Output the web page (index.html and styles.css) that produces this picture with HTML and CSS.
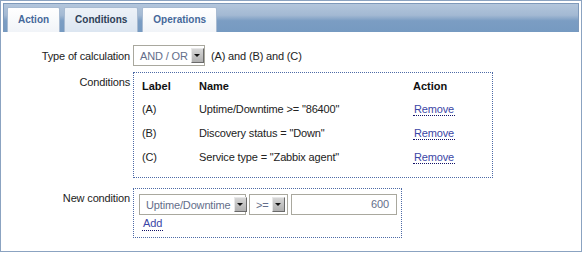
FILE: index.html
```html
<!DOCTYPE html>
<html lang="en">
<head>
    <meta charset="UTF-8">
    <title>Action conditions</title>
    <link rel="stylesheet" href="styles.css">
</head>
<body>
    <div class="frame">
        <ul class="tabs">
            <li class="tab">Action</li>
            <li class="tab active">Conditions</li>
            <li class="tab">Operations</li>
        </ul>

        <div class="form">
            <div class="row row-calc">
                <label class="row-label">Type of calculation</label>
                <div class="row-field">
                    <span class="select select-calc"><span class="select-text">AND / OR</span><span class="arrow"></span></span>
                    <span class="formula">(A) and (B) and (C)</span>
                </div>
            </div>

            <div class="row row-conditions">
                <label class="row-label">Conditions</label>
                <div class="box box-conditions">
                    <table class="cond-table">
                        <tr>
                            <th class="col-label">Label</th>
                            <th class="col-name">Name</th>
                            <th class="col-action">Action</th>
                        </tr>
                        <tr>
                            <td>(A)</td>
                            <td>Uptime/Downtime &gt;= "86400"</td>
                            <td><a class="link">Remove</a></td>
                        </tr>
                        <tr>
                            <td>(B)</td>
                            <td>Discovery status = "Down"</td>
                            <td><a class="link">Remove</a></td>
                        </tr>
                        <tr>
                            <td>(C)</td>
                            <td>Service type = "Zabbix agent"</td>
                            <td><a class="link">Remove</a></td>
                        </tr>
                    </table>
                </div>
            </div>

            <div class="row row-new">
                <label class="row-label">New condition</label>
                <div class="box box-new">
                    <div class="new-fields">
                        <span class="select select-type"><span class="select-text">Uptime/Downtime</span><span class="arrow"></span></span>
                        <span class="select select-op"><span class="select-text">&gt;=</span><span class="arrow"></span></span>
                        <span class="input-value">600</span>
                    </div>
                    <a class="link link-add">Add</a>
                </div>
            </div>
        </div>
    </div>
</body>
</html>
```

FILE: styles.css
```css
* {
    margin: 0;
    padding: 0;
    box-sizing: border-box;
}

body {
    font-family: 'Liberation Sans', Arial, sans-serif;
    font-size: 11px;
    letter-spacing: -0.15px;
    color: #1a1a1a;
    background-color: #ffffff;
}

.frame {
    width: 582px;
    height: 252px;
    border: 1px solid #8ba3c1;
    padding: 2px;
    background-color: #ffffff;
}

/* tab bar */
.tabs {
    display: flex;
    gap: 4px;
    list-style: none;
    height: 29px;
    padding: 3px 0 0 3px;
    border: 1px solid #7e99ba;
    border-bottom: none;
    background: linear-gradient(to bottom, #b3c6dc 0%, #a3b9d3 40%, #7b9dc3 60%, #769ac1 100%);
}

.tab {
    height: 25px;
    padding: 0 10px;
    line-height: 24px;
    font-weight: bold;
    font-size: 10px;
    letter-spacing: 0;
    color: #45689a;
    background: linear-gradient(to bottom, #ffffff, #f1f4f8);
    border: 1px solid #a8bbd2;
    border-bottom: none;
    border-radius: 2px 2px 0 0;
}

.tab.active {
    color: #2e3f58;
    background: linear-gradient(to bottom, #edf2f8, #dce6f1);
}

/* form */
.form {
    padding-top: 13px;
}

.row {
    display: grid;
    grid-template-columns: 127px auto;
    column-gap: 3px;
    align-items: start;
}

.row-label {
    text-align: right;
    color: #222222;
}

.row-calc {
    align-items: center;
}

.row-field {
    display: flex;
    align-items: center;
    gap: 6px;
}

.row-conditions {
    margin-top: 6px;
}

.row-conditions .row-label {
    padding-top: 4px;
}

.row-new {
    margin-top: 10px;
}

.row-new .row-label {
    padding-top: 4px;
}

/* fake selects */
.select {
    display: inline-flex;
    align-items: center;
    flex-shrink: 0;
    height: 21px;
    padding: 0 2px 0 6px;
    border: 1px solid #a9a89e;
    background-color: #ffffff;
    color: #646e8a;
    white-space: nowrap;
}

.select-text {
    flex: 1;
}

.arrow {
    position: relative;
    flex-shrink: 0;
    width: 13px;
    height: 15px;
    margin-left: 3px;
    background: linear-gradient(to bottom, #d6d6d6, #b0b0b0);
    border: 1px solid #6a6a6a;
    border-top-color: #e8e8e8;
    border-left-color: #e8e8e8;
}

.arrow::after {
    content: "";
    position: absolute;
    left: 2px;
    top: 5px;
    border-left: 3px solid transparent;
    border-right: 3px solid transparent;
    border-top: 3px solid #111111;
}

.select-calc {
    width: 72px;
}

.formula {
    color: #222222;
}

/* dotted boxes */
.box {
    border: 1px dotted #4d6aa6;
}

.box-conditions {
    width: 360px;
    height: 106px;
    padding: 1px 0 0 8px;
}

.cond-table {
    border-collapse: collapse;
}

.cond-table th {
    text-align: left;
    font-weight: bold;
    font-size: 11px;
    letter-spacing: 0;
    color: #111111;
    height: 23px;
}

.cond-table td {
    height: 24px;
    color: #222222;
}

.col-label {
    width: 57px;
}

.col-name {
    width: 214px;
}

.link {
    color: #3b46a6;
    border-bottom: 1px dotted #111166;
    padding: 0 1px;
    cursor: pointer;
}

.box-new {
    width: 269px;
    height: 50px;
    padding: 5px 0 0 5px;
}

.new-fields {
    display: flex;
    gap: 3px;
}

.select-type {
    width: 107px;
}

.select-op {
    width: 39px;
}

.input-value {
    display: inline-block;
    width: 106px;
    height: 21px;
    line-height: 19px;
    padding-right: 7px;
    text-align: right;
    border: 1px solid #a9a89e;
    color: #646e8a;
}

.link-add {
    display: inline-block;
    margin: 2px 0 0 3px;
    line-height: 13px;
}
```
